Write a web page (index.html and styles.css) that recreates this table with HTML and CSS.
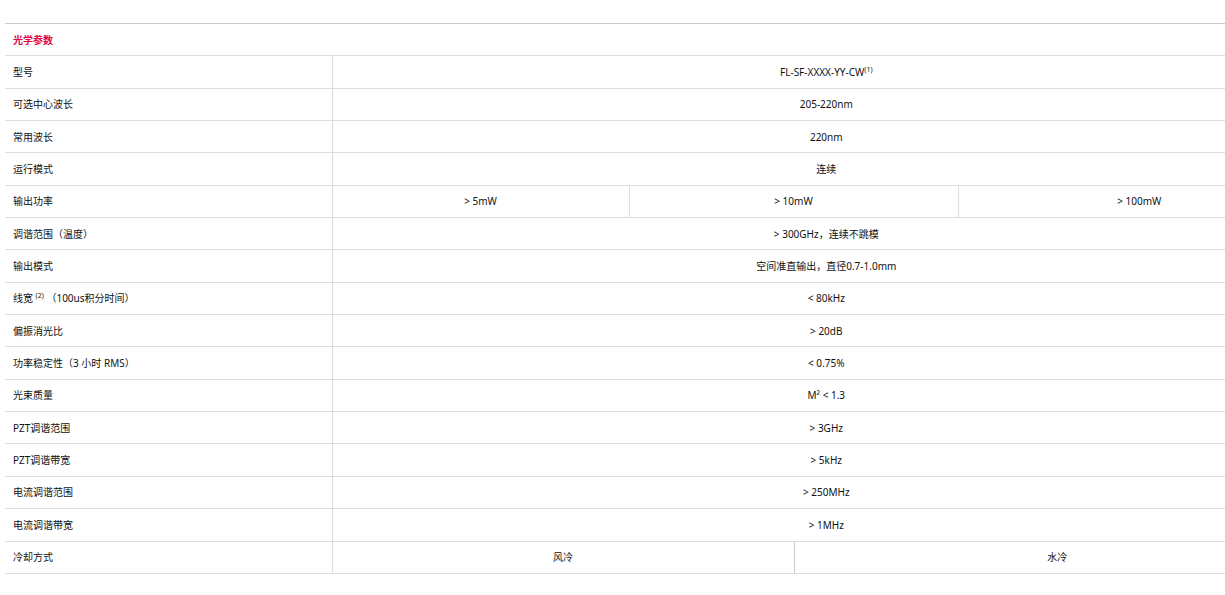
FILE: index.html
```html
<!DOCTYPE html>
<html lang="zh">
<head>
<meta charset="utf-8">
<title>光学参数</title>
<link rel="stylesheet" href="styles.css">
</head>
<body>
<div class="page">
<div class="clip">
<table class="spec">
<colgroup>
<col class="c1"><col class="c2"><col class="c3"><col class="c4"><col class="c5">
</colgroup>
<tbody>
<tr class="head"><td colspan="5" class="title">光学参数</td></tr>
<tr><td class="label">型号</td><td colspan="4">FL-SF-XXXX-YY-CW<sup>(1)</sup></td></tr>
<tr><td class="label">可选中心波长</td><td colspan="4">205-220nm</td></tr>
<tr><td class="label">常用波长</td><td colspan="4">220nm</td></tr>
<tr><td class="label">运行模式</td><td colspan="4">连续</td></tr>
<tr><td class="label">输出功率</td><td>&gt; 5mW</td><td colspan="2">&gt; 10mW</td><td>&gt; 100mW</td></tr>
<tr><td class="label">调谐范围（温度）</td><td colspan="4">&gt; 300GHz，连续不跳模</td></tr>
<tr><td class="label">输出模式</td><td colspan="4">空间准直输出，直径0.7-1.0mm</td></tr>
<tr><td class="label">线宽 <sup>(2)</sup> （100us积分时间）</td><td colspan="4">&lt; 80kHz</td></tr>
<tr><td class="label">偏振消光比</td><td colspan="4">&gt; 20dB</td></tr>
<tr><td class="label">功率稳定性（3 小时 RMS）</td><td colspan="4">&lt; 0.75%</td></tr>
<tr><td class="label">光束质量</td><td colspan="4">M² &lt; 1.3</td></tr>
<tr><td class="label">PZT调谐范围</td><td colspan="4">&gt; 3GHz</td></tr>
<tr><td class="label">PZT调谐带宽</td><td colspan="4">&gt; 5kHz</td></tr>
<tr><td class="label">电流调谐范围</td><td colspan="4">&gt; 250MHz</td></tr>
<tr><td class="label">电流调谐带宽</td><td colspan="4">&gt; 1MHz</td></tr>
<tr><td class="label">冷却方式</td><td colspan="2" class="dark">风冷</td><td colspan="2">水冷</td></tr>
</tbody>
</table>
</div>
</div>
</body>
</html>
```
FILE: styles.css
```css
html, body {
  margin: 0;
  padding: 0;
  background: #ffffff;
  overflow: hidden;
}
.page {
  padding: 23px 0 0 5px;
  font-family: "Noto Sans", "Noto Sans CJK SC", sans-serif;
  font-size: 10px;
  color: #111111;
}
.clip {
  width: 1220px;
  overflow: hidden;
}
.spec {
  border-collapse: collapse;
  table-layout: fixed;
  width: 1315px;
}
.c1 { width: 327px; }
.c2 { width: 297px; }
.c3 { width: 165px; }
.c4 { width: 164px; }
.c5 { width: 362px; }
.spec tr { height: 32.35px; }
.spec td {
  border-top: 1px solid #dddddd;
  border-bottom: 1px solid #dddddd;
  border-left: 1px solid #dddddd;
  padding: 0 8px;
  text-align: center;
  vertical-align: middle;
  line-height: 14px;
  white-space: nowrap;
}
.spec td.label {
  text-align: left;
  border-left: none;
}
.spec td.title {
  text-align: left;
  border-left: none;
  border-top: 1px solid #cccccc;
  color: #e4003a;
  font-weight: bold;
}
.spec td.dark + td { border-left-color: #cccccc; }
sup {
  font-size: 7px;
  line-height: 0;
  vertical-align: 4px;
}
```
